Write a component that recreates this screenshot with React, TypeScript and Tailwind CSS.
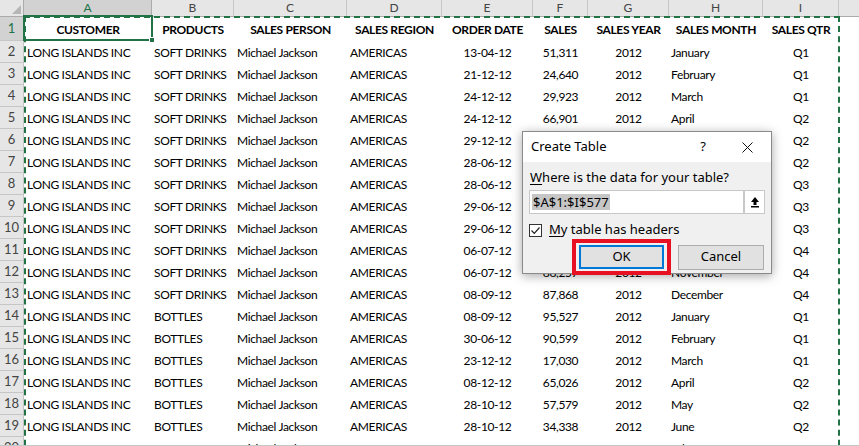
import React from 'react';

const COLS = [
  { key: 'A', w: 128, title: 'CUSTOMER', align: 'text-left pl-[3px]' },
  { key: 'B', w: 82, title: 'PRODUCTS', align: 'text-left pl-[2px]' },
  { key: 'C', w: 113, title: 'SALES PERSON', align: 'text-left pl-[3px]' },
  { key: 'D', w: 95, title: 'SALES REGION', align: 'text-left pl-[3px]' },
  { key: 'E', w: 91, title: 'ORDER DATE', align: 'text-center' },
  { key: 'F', w: 55, title: 'SALES', align: 'text-center' },
  { key: 'G', w: 81, title: 'SALES YEAR', align: 'text-center' },
  { key: 'H', w: 94, title: 'SALES MONTH', align: 'text-left pl-[2px]' },
  { key: 'I', w: 76, title: 'SALES QTR', align: 'text-center' },
  { key: 'J', w: 40, title: '', align: 'text-left' },
];

const ROWS: string[][] = [
  ['13-04-12', '51,311', 'January', 'Q1'],
  ['21-12-12', '24,640', 'February', 'Q1'],
  ['24-12-12', '29,923', 'March', 'Q1'],
  ['24-12-12', '66,901', 'April', 'Q2'],
  ['29-12-12', '45,732', 'May', 'Q2'],
  ['28-06-12', '38,420', 'June', 'Q2'],
  ['28-06-12', '72,106', 'July', 'Q3'],
  ['29-06-12', '13,594', 'August', 'Q3'],
  ['29-06-12', '59,248', 'September', 'Q3'],
  ['06-07-12', '41,875', 'October', 'Q4'],
  ['06-07-12', '88,257', 'November', 'Q4'],
  ['08-09-12', '87,868', 'December', 'Q4'],
  ['08-09-12', '95,527', 'January', 'Q1'],
  ['30-06-12', '90,599', 'February', 'Q1'],
  ['23-12-12', '17,030', 'March', 'Q1'],
  ['08-12-12', '65,026', 'April', 'Q2'],
  ['28-10-12', '57,579', 'May', 'Q2'],
  ['28-10-12', '34,338', 'June', 'Q2'],
  ['28-10-12', '21,846', 'July', 'Q3'],
];

const rowData = (i: number) => {
  const [date, sales, month, qtr] = ROWS[i];
  return [
    'LONG ISLANDS INC',
    i < 12 ? 'SOFT DRINKS' : 'BOTTLES',
    'Michael Jackson',
    'AMERICAS',
    date,
    sales,
    '2012',
    month,
    qtr,
    '',
  ];
};

const RowHead = ({ n, active }: { n: number; active?: boolean }) => (
  <div
    className={`w-[24px] shrink-0 flex items-center justify-center text-[13px] tracking-normal border-r border-b border-[#c6c6c6] ${
      active ? 'bg-[#d2d2d2] text-[#217346]' : 'bg-[#e6e6e6] text-[#444]'
    }`}
  >
    {n}
  </div>
);

const App: React.FC = () => {
  return (
    <div className="relative w-[859px] h-[446px] overflow-hidden bg-white text-[12px] tracking-[-0.35px] text-black font-['Lato','Liberation_Sans',sans-serif]">
      {/* Column letters */}
      <div className="flex h-[17px] text-[12px] tracking-normal">
        <div className="relative w-[24px] shrink-0 bg-[#e6e6e6] border-r border-b border-[#ababab]">
          <svg className="absolute right-[2px] bottom-[2px]" width="9" height="9" viewBox="0 0 9 9">
            <polygon points="9,0 9,9 0,9" fill="#b6b6b6" />
          </svg>
        </div>
        {COLS.map((c) =>
          c.key === 'A' ? (
            <div
              key={c.key}
              style={{ width: c.w }}
              className="shrink-0 flex items-center justify-center bg-[#d2d2d2] text-[#217346] border-r border-[#ababab] border-b-2 border-b-[#217346]"
            >
              {c.key}
            </div>
          ) : (
            <div
              key={c.key}
              style={{ width: c.w }}
              className="shrink-0 flex items-center justify-center bg-[#e6e6e6] text-[#444] border-r border-b border-[#c6c6c6] border-b-[#ababab]"
            >
              {c.key !== 'J' ? c.key : ''}
            </div>
          )
        )}
      </div>

      {/* Header row */}
      <div className="flex h-[24px]">
        <RowHead n={1} active />
        {COLS.map((c) => (
          <div key={c.key} style={{ width: c.w }} className="shrink-0 flex items-center justify-center font-bold pt-[1px]">
            {c.title}
          </div>
        ))}
      </div>

      {/* Data rows */}
      {ROWS.map((_, i) => (
        <div key={i} className="flex h-[22px]">
          <RowHead n={i + 2} />
          {rowData(i).map((v, j) => (
            <div
              key={j}
              style={{ width: COLS[j].w }}
              className={`shrink-0 flex items-center pt-[1px] whitespace-nowrap overflow-hidden ${COLS[j].align} ${
                COLS[j].align === 'text-center' ? 'justify-center' : ''
              }`}
            >
              {v}
            </div>
          ))}
        </div>
      ))}

      {/* Copy marquee around A1:I */}
      <div className="absolute left-[24px] top-[16px] w-[816px] h-[460px] border-2 border-dashed border-[#217346] pointer-events-none" />

      {/* Active cell A1 */}
      <div className="absolute left-[23px] top-[15px] w-[130px] h-[26px] border-2 border-[#217346] pointer-events-none" />
      <div className="absolute left-[149px] top-[37px] w-[6px] h-[6px] bg-[#217346] border border-white" />

      {/* bottom edge */}
      <div className="absolute left-0 right-0 bottom-0 h-[1px] bg-[#c6c6c6]" />

      {/* Create Table dialog */}
      <div className="absolute left-[522px] top-[131px] w-[250px] h-[143px] border border-[#8a8a8a] bg-[#f0f0f0] shadow-[0_2px_10px_rgba(0,0,0,0.35)] font-['Noto_Sans','Open_Sans',sans-serif] text-[13px] tracking-normal text-black flex flex-col">
        <div className="h-[30px] bg-white flex items-center pl-[8px] pr-[18px] shrink-0">
          <span className="flex-1">Create Table</span>
          <span className="mr-[36px]">?</span>
          <svg width="11" height="11" viewBox="0 0 11 11">
            <path d="M0.5 0.5 L10.5 10.5 M10.5 0.5 L0.5 10.5" stroke="#111" strokeWidth="1" />
          </svg>
        </div>
        <div className="flex flex-col px-[6px] pt-[6px]">
          <div className="leading-[18px] pl-[1px]">
            <span className="underline underline-offset-2">W</span>here is the data for your table?
          </div>
          <div className="mt-[4px] flex h-[24px] border border-[#c8c8c8] bg-white">
            <div className="flex-1 flex items-center pl-[2px]">
              <span className="bg-[#c6c6c6] leading-[16px] px-[1px]">$A$1:$I$577</span>
            </div>
            <div className="w-[21px] border-l-[2px] border-l-[#c8c8c8] flex items-center justify-center bg-white">
              <svg width="10" height="12" viewBox="0 0 10 12">
                <path d="M5 1 L1 6 L3.5 6 L3.5 9 L6.5 9 L6.5 6 L9 6 Z" fill="#000" />
                <rect x="1" y="10" width="8" height="1.5" fill="#000" />
              </svg>
            </div>
          </div>
          <div className="mt-[9px] flex items-center h-[14px]">
            <div className="w-[13px] h-[13px] border border-[#333] bg-white flex items-center justify-center">
              <svg width="11" height="11" viewBox="0 0 11 11">
                <path d="M1.5 5.5 L4.3 8.3 L9.5 2.5" stroke="#222" strokeWidth="1.2" fill="none" />
              </svg>
            </div>
            <span className="ml-[7px]">
              <span className="underline underline-offset-2">M</span>y table has headers
            </span>
          </div>
          <div className="mt-[2px] flex items-center">
            <div className="ml-[43px] border-[4px] border-[#e81123] px-[3px] py-[2px]">
              <div className="w-[85px] h-[24px] bg-[#e1e1e1] border-2 border-[#0078d7] flex items-center justify-center">
                OK
              </div>
            </div>
            <div className="ml-[7px] w-[86px] h-[25px] bg-[#e1e1e1] border border-[#adadad] flex items-center justify-center">
              Cancel
            </div>
          </div>
        </div>
      </div>
    </div>
  );
};

export default App;
